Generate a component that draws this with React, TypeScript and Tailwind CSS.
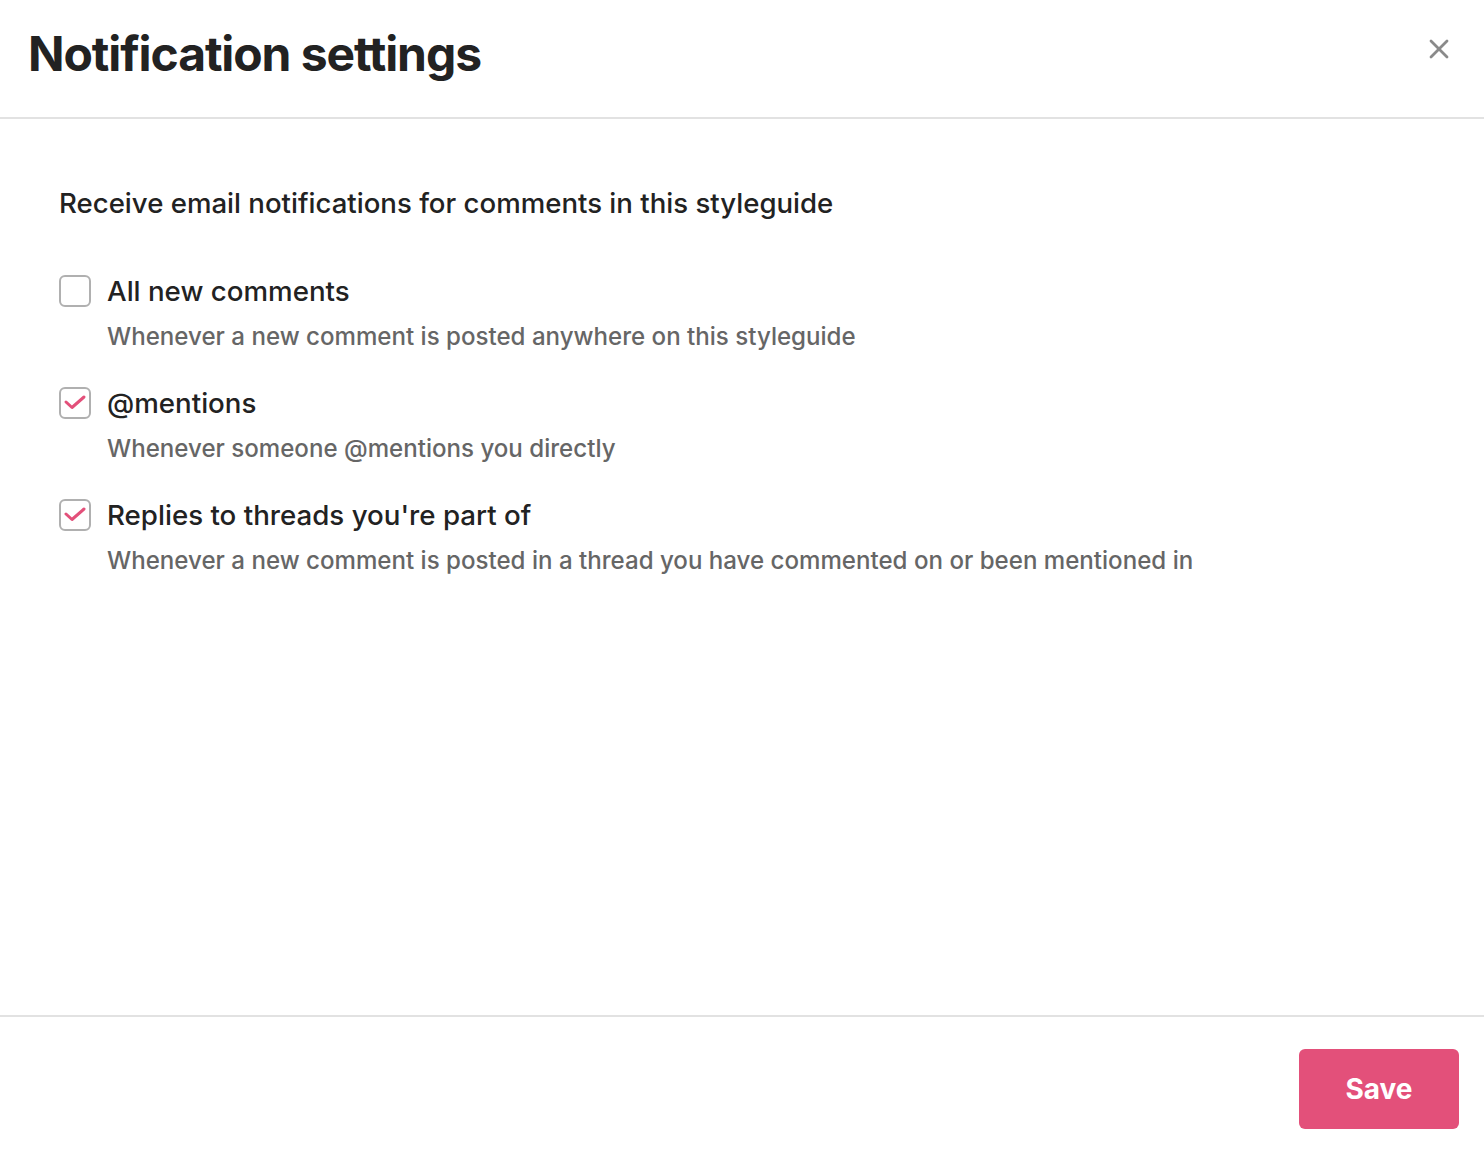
import { X } from 'lucide-react';

const options = [
  {
    label: 'All new comments',
    description: 'Whenever a new comment is posted anywhere on this styleguide',
    checked: false,
  },
  {
    label: '@mentions',
    description: 'Whenever someone @mentions you directly',
    checked: true,
  },
  {
    label: "Replies to threads you're part of",
    description: 'Whenever a new comment is posted in a thread you have commented on or been mentioned in',
    checked: true,
  },
];

function Checkbox({ checked }: { checked: boolean }) {
  return (
    <span className="flex items-center justify-center flex-shrink-0 w-8 h-8 rounded-[6px] border-2 border-[#b0b0b0] bg-white">
      {checked && (
        <svg width="24" height="24" viewBox="0 0 24 24" fill="none">
          <path d="M3 11l6 5.5L21 6" stroke="#e3507a" strokeWidth="3" strokeLinecap="round" strokeLinejoin="round" />
        </svg>
      )}
    </span>
  );
}

export default function App() {
  return (
    <div className="flex flex-col h-[1152px] w-full bg-white text-[#222] font-['Inter',sans-serif]">
      <header className="flex items-start justify-between h-[119px] pl-7 pr-[29px] border-b-2 border-[#e2e2e2]">
        <h1 className="mt-[24px] text-[48px] font-bold leading-[60px] tracking-[-1.1px] text-[#222]">
          Notification settings
        </h1>
        <button className="mt-[33px] text-[#8a8a8a]">
          <X size={32} strokeWidth={2.1} />
        </button>
      </header>

      <main className="flex-1 px-[59px] pt-[67px]">
        <p className="text-[27.6px] font-medium leading-[34px] text-[#222]">
          Receive email notifications for comments in this styleguide
        </p>
        <ul className="mt-[55px] space-y-[33px]">
          {options.map((o) => (
            <li key={o.label} className="flex items-start gap-4">
              <Checkbox checked={o.checked} />
              <div>
                <div className="text-[27.7px] font-medium leading-[32px] text-[#222]">{o.label}</div>
                <div className="mt-[13px] text-[24.1px] font-medium leading-[34px] text-[#666]">{o.description}</div>
              </div>
            </li>
          ))}
        </ul>
      </main>

      <footer className="flex justify-end h-[137px] pt-[32px] pr-[25px] border-t-2 border-[#e2e2e2]">
        <button className="w-[160px] h-[80px] rounded-[6px] bg-[#e3507a] text-white text-[28px] font-bold">
          Save
        </button>
      </footer>
    </div>
  );
}
